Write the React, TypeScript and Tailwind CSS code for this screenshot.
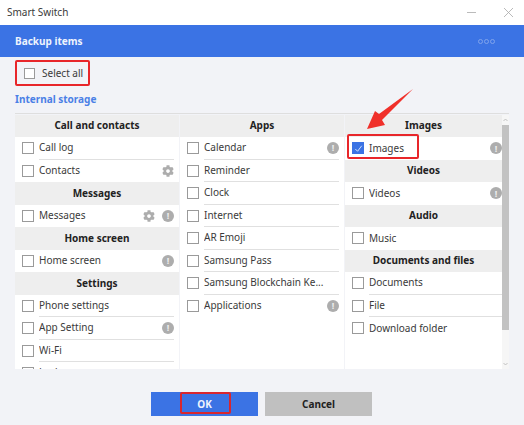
import React from "react";
import { FaCog } from "react-icons/fa";

type R = { h?: string; t?: string; gear?: boolean; info?: boolean; line?: boolean; checked?: boolean };

const Info = () => (
  <span className="flex h-[12px] w-[12px] shrink-0 items-center justify-center rounded-full bg-[#adadad] text-[9px] font-bold leading-none text-[#eeeeee]">!</span>
);

const Row = ({ r, mr }: { r: R; mr: string }) => {
  if (r.h)
    return <div className="flex h-[22.5px] items-center justify-center bg-[#eeeeee] text-[10px] font-bold text-[#222]">{r.h}</div>;
  return (
    <div className="flex h-[22.5px] items-center bg-white pl-[7px]">
      {r.checked ? (
        <span className="flex h-[12px] w-[12px] shrink-0 items-center justify-center bg-[#3b73e4]">
          <svg viewBox="0 0 12 12" className="h-[11px] w-[11px]" fill="none" stroke="#dfe8fb" strokeWidth="1"><path d="M2.5 6.5 5 9l4.5-6" /></svg>
        </span>
      ) : (
        <span className="h-[12px] w-[12px] shrink-0 border border-[#9a9a9a] bg-white" />
      )}
      <div className={`ml-[5px] flex h-full min-w-0 flex-1 items-center gap-[7px] ${mr} ${r.line === false ? "" : "border-b border-[#e0e0e0]"}`}>
        <span className="min-w-0 flex-1 truncate text-[10px] text-[#3a3a3a]">{r.t}</span>
        {r.gear && <FaCog className="h-[12px] w-[12px] shrink-0 text-[#adadad]" />}
        {r.info && <Info />}
      </div>
    </div>
  );
};

const col1: R[] = [
  { h: "Call and contacts" }, { t: "Call log" }, { t: "Contacts", gear: true, line: false },
  { h: "Messages" }, { t: "Messages", gear: true, info: true, line: false },
  { h: "Home screen" }, { t: "Home screen", info: true, line: false },
  { h: "Settings" }, { t: "Phone settings" }, { t: "App Setting", info: true }, { t: "Wi-Fi" }, { t: "Lock screen" },
];
const col2: R[] = [
  { h: "Apps" }, { t: "Calendar", info: true }, { t: "Reminder" }, { t: "Clock" }, { t: "Internet" }, { t: "AR Emoji" },
  { t: "Samsung Pass" }, { t: "Samsung Blockchain Ke..." }, { t: "Applications", info: true, line: false },
];
const col3: R[] = [
  { h: "Images" }, { t: "Images", info: true, checked: true, line: false },
  { h: "Videos" }, { t: "Videos", info: true, line: false },
  { h: "Audio" }, { t: "Music", line: false },
  { h: "Documents and files" }, { t: "Documents" }, { t: "File" }, { t: "Download folder", line: false },
];

const Col = ({ rows, cls, mr }: { rows: R[]; cls: string; mr: string }) => (
  <div className={`shrink-0 ${cls}`}>
    {rows.map((r, i) => <Row key={i} r={r} mr={mr} />)}
  </div>
);

export default function App() {
  return (
    <div className="relative flex h-[425px] w-[524px] flex-col overflow-hidden bg-[#f2f3f7]" style={{ fontFamily: '"Noto Sans", sans-serif' }}>
      <div className="flex h-[25px] shrink-0 items-center justify-between bg-white pl-[7px] pr-[11px]">
        <span className="text-[10px] text-[#3a3a3a]">Smart Switch</span>
        <div className="flex items-center gap-[28px]">
          <span className="h-px w-[9px] bg-[#bbb]" />
          <svg viewBox="0 0 10 10" className="h-[9px] w-[9px]" fill="none" stroke="#aaa" strokeWidth="0.9"><path d="M0 0 10 10M10 0 0 10" /></svg>
        </div>
      </div>
      <div className="flex h-[32px] shrink-0 items-center justify-between bg-[#3b73e4] pl-[15px] pr-[29px]">
        <span className="text-[10px] font-bold text-[#eef3fd]">Backup items</span>
        <div className="flex gap-[1px]">
          <span className="h-[5px] w-[5px] rounded-full border border-[#7fa3ec]" />
          <span className="h-[5px] w-[5px] rounded-full border border-[#7fa3ec]" />
          <span className="h-[5px] w-[5px] rounded-full border border-[#7fa3ec]" />
        </div>
      </div>
      <div className="flex h-[31px] shrink-0 items-center pl-[24px] pt-[2px]">
        <span className="h-[11px] w-[11px] border border-[#9a9a9a] bg-white" />
        <span className="ml-[7px] text-[10px] text-[#3a3a3a]">Select all</span>
      </div>
      <div className="flex h-[25px] shrink-0 items-center pb-[2px] pl-[15px]">
        <span className="text-[10px] font-bold text-[#4a80e6]">Internal storage</span>
      </div>
      <div className="mx-[15px] flex h-[256px] shrink-0 gap-px overflow-hidden border-t border-[#dedede] bg-[#f2f3f7] pt-[0.5px]">
        <Col rows={col1} cls="w-[164px]" mr="mr-[5px]" />
        <Col rows={col2} cls="h-full w-[164px] bg-white" mr="mr-[5px]" />
        <Col rows={col3} cls="h-full w-[157px] bg-white" mr="mr-0" />
        <div className="-ml-px flex h-full w-[7px] shrink-0 flex-col justify-between bg-[#f6f6f6]">
          <div>
            <svg viewBox="0 0 7 10" className="h-[10px] w-[7px]" fill="none" stroke="#b5b5b5" strokeWidth="0.8"><path d="M1.5 6 3.5 4l2 2" /></svg>
            <div className="h-[205px] w-full bg-[#c2c2c2]" />
          </div>
          <svg viewBox="0 0 7 10" className="h-[10px] w-[7px]" fill="none" stroke="#b5b5b5" strokeWidth="0.8"><path d="M1.5 4 3.5 6l2-2" /></svg>
        </div>
      </div>
      <div className="mt-[23px] flex justify-center gap-[7px] pr-[1px]">
        <div className="flex h-[24px] w-[107px] items-center justify-center bg-[#3b73e4] text-[10px] font-bold text-[#eef3fd]">OK</div>
        <div className="flex h-[24px] w-[107px] items-center justify-center bg-[#c0c0c0] text-[10px] font-bold text-[#222]">Cancel</div>
      </div>

      <div className="absolute left-[15px] top-[60px] h-[26px] w-[75px] rounded-[2px] border-2 border-[#e8262a]" />
      <div className="absolute left-[347px] top-[134px] h-[25px] w-[72px] rounded-[2px] border-2 border-[#e8262a]" />
      <div className="absolute left-[180px] top-[392px] h-[22px] w-[51px] rounded-[2px] border-2 border-[#d9262e]" />
      <svg className="absolute left-[360px] top-[85px] h-[50px] w-[60px]" viewBox="360 85 60 50">
        <polygon points="413,89 379,114 375,111 367,129 385,125 382,120" fill="#f0302a" />
      </svg>
    </div>
  );
}
